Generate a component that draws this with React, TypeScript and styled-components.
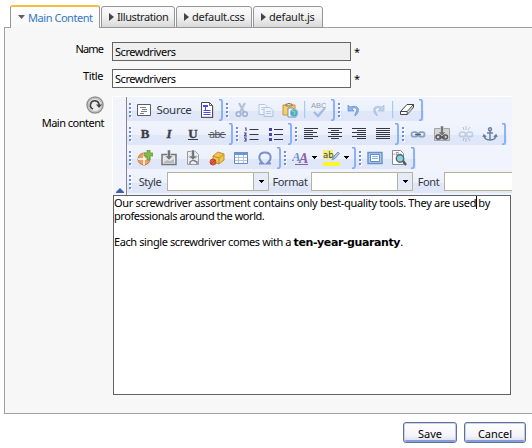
import React from 'react';
import styled, { createGlobalStyle, css } from 'styled-components';

const Global = createGlobalStyle`
  * { box-sizing: border-box; }
  body { margin: 0; background: #fff; overflow: hidden; }
  #root { width: 532px; height: 448px; overflow: hidden; }
`;

const Page = styled.div`
  width: 532px;
  height: 448px;
  padding: 5px 0 0 4px;
  background: #fff;
  color: #000;
  font: 11px/13px 'Noto Sans', 'Open Sans', sans-serif;
`;
const Tabs = styled.div`
  display: flex;
  align-items: flex-end;
  gap: 1px;
  height: 23px;
  padding-left: 6px;
`;
const Tab = styled.div<{ $w: number; $active?: boolean }>`
  display: flex;
  align-items: center;
  gap: 3px;
  width: ${p => p.$w}px;
  height: 22px;
  padding: 0 0 1px 7px;
  border: 1px solid #969696;
  border-radius: 3px 3px 0 0;
  background: linear-gradient(#fbfbfb 0%, #f1f1f1 50%, #d9d9d9 100%);
  color: #222;
  position: relative;
  svg { flex: none; }
  ${p => p.$active && css`
    height: 23px;
    padding-left: 7px;
    border-top: 2px solid #f4bf41;
    border-bottom: 0;
    background: linear-gradient(#fff, #f7f7f7);
    color: #3478bd;
    z-index: 1;
  `}
`;
const T = styled.span<{ $ls?: number; $size?: number }>`
  white-space: pre;
  letter-spacing: ${p => p.$ls ?? -0.4}px;
  font-size: ${p => p.$size ?? 11}px;
`;
const Panel = styled.main`
  height: 387px;
  margin-top: -1px;
  padding: 14px 0 0 0;
  border: solid #a0a0a0;
  border-width: 1px 0 1px 1px;
  background: #f7f7f7;
`;
const Field = styled.div`
  display: flex;
  height: 27px;
`;
const Label = styled.label`
  width: 107px;
  padding-right: 9px;
  text-align: right;
`;
const Input = styled.div<{ $readonly?: boolean }>`
  width: 239px;
  height: 19px;
  padding: 2px 2px;
  border: 1px solid #646466;
  background: ${p => (p.$readonly ? '#efefef' : '#fff')};
`;
const Star = styled.span`
  padding: 3px 0 0 3px;
`;
const EditorRow = styled.div`
  display: flex;
`;
const EditorLabel = styled.div`
  display: flex;
  flex-direction: column;
  align-items: flex-end;
  width: 107px;
  padding-right: 8px;
  gap: 2px;
`;
const Editor = styled.div`
  width: 400px;
`;
const Toolbar = styled.div`
  display: flex;
  height: 99px;
  border-top: 1px solid #fff;
  border-left: 1px solid #fff;
  background: #f1f4fd;
`;
const Collapse = styled.div`
  display: flex;
  align-items: flex-end;
  justify-content: center;
  width: 14px;
  padding-bottom: 2px;
  border-right: 1px solid #85858b;
`;
const Rows = styled.div`
  flex: 1;
  overflow: hidden;
`;
const Row = styled.div`
  display: flex;
  height: 24px;
  padding-top: 1px;
`;
const Group = styled.div<{ $grow?: boolean }>`
  display: flex;
  align-items: center;
  flex: ${p => (p.$grow ? '1' : 'none')};
  height: 23px;
  background: linear-gradient(#f1f4fd 0%, #eaf0fc 56%, #dfe7f9 57%, #dfe6f8 100%);
`;
const Slot = styled.div<{ $w?: number }>`
  display: flex;
  align-items: center;
  justify-content: center;
  flex: none;
  width: ${p => p.$w ?? 24}px;
  color: #363743;
  svg { display: block; flex: none; }
`;
const Combo = styled.div<{ $cut?: boolean }>`
  display: flex;
  flex: none;
  width: ${p => (p.$cut ? 68 : 102)}px;
  height: 19px;
  border: 1px solid #b4b49c;
  border-right-width: ${p => (p.$cut ? 0 : 1)}px;
  background: #fff;
`;
const ComboArrow = styled.div`
  display: flex;
  align-items: center;
  justify-content: center;
  width: 15px;
  margin-left: auto;
  border-left: 1px solid #b4b49c;
  background: #e5ebf8;
`;
const Document = styled.div`
  width: 398px;
  height: 200px;
  margin-left: 1px;
  padding: 0;
  border: 1px solid #626266;
  background: #fff;
`;
const Line = styled.div`
  display: flex;
  height: 13px;
`;
const Caret = styled.i`
  width: 1px;
  height: 13px;
  margin: 0 1px 0 0;
  background: #000;
`;
const Bold = styled.b<{ $ls: number }>`
  letter-spacing: ${p => p.$ls}px;
  font-family: 'DejaVu Sans', sans-serif;
`;
const Actions = styled.div`
  display: flex;
  justify-content: flex-end;
  gap: 7px;
  padding: 8px 6px 0 0;
`;
const Button = styled.button<{ $w: number }>`
  width: ${p => p.$w}px;
  height: 21px;
  padding: 1px 0 0;
  border: 1px solid #686f88;
  border-radius: 3px;
  background: linear-gradient(#fff, #f5f5fa 65%, #dcdce9);
  box-shadow: inset 0 1px #c5d5fa, inset 1px 0 #c5d5fa, inset -1px 0 #b6caf6, inset 0 -2px #819ddd;
  font: 11px/13px 'Noto Sans', sans-serif;
  color: #000;
`;

const Tri = ({ down, c = '#444' }: { down?: boolean; c?: string }) => (
  <svg width={down ? 7 : 5} height={down ? 4 : 8}><path fill={c} d={down ? 'M0 0h7L3.5 4z' : 'M0 0v8L5 4z'} /></svg>
);
const SmallDown = () => <svg width="5" height="3" shapeRendering="crispEdges"><path d="M0 0h5v1H4v1H3v1H2V2H1V1H0z" /></svg>;
const Handle = () => (
  <Slot $w={6}><svg width="6" height="18" shapeRendering="crispEdges">
    {[2, 6, 10, 14].map(y => <g key={y}><path fill="#fff" d={`M3 ${y + 1}h2v2h-2z`} /><path fill="#6b8ddb" d={`M2 ${y}h2v2h-2z`} /></g>)}
  </svg></Slot>
);
const End = () => (
  <Slot $w={5}><svg width="5" height="22"><path d="M0 .5h1.5Q3 .5 3 3v16Q3 21.5 0 21.5" fill="none" stroke="#86aaf5" strokeWidth="1.8" /></svg></Slot>
);
const Sep = () => <Slot $w={5}><svg width="2" height="17"><path fill="#a6c9f5" d="M0 0h1.2v17H0z" /></svg></Slot>;
const Ic = ({ children, o = 1, w = 16 }: { children: React.ReactNode; o?: number; w?: number }) => (
  <svg width={w} height="16" viewBox={`0 0 ${w} 16`} fill="none" stroke="currentColor" opacity={o}>{children}</svg>
);
const Serif = ({ ch, children, it }: { ch: string; children?: React.ReactNode; it?: boolean }) => (
  <Slot><Ic><text x="8" y="12" textAnchor="middle" fontFamily="Liberation Serif, serif" fontWeight="bold" fontStyle={it ? 'italic' : 'normal'} fontSize="13" fill="#3b3d49" stroke="#3b3d49" strokeWidth=".35">{ch}</text>{children}</Ic></Slot>
);
const Align = ({ rows }: { rows: [number, number][] }) => (
  <Slot><svg width="14" height="12" shapeRendering="crispEdges" fill="#343641">{rows.map(([x, w], i) => <rect key={i} x={x} y={i * 2} width={w} height="1" />)}</svg></Slot>
);
const Chain = ({ broken }: { broken?: boolean }) => (
  <Ic o={broken ? .4 : 1}>
    <g stroke="#8ba2bd" strokeWidth="1.8"><rect x="1.5" y="6.2" width="6" height="4.5" rx="2" /><rect x="8.5" y="6.2" width="6" height="4.5" rx="2" /></g>
    {broken ? <path stroke="#687687" d="M5 1l1 3M8 0v4M12 1l-2 3M5 15l1-3M8 16v-4M12 15l-2-3" /> : <path stroke="#50677f" strokeWidth="1.5" d="M5 8.5h6" />}
  </Ic>
);
const Download = () => <path d="M6.5 0h3v6H12l-4 4-4-4h2.5z" fill="#73777d" stroke="#eee" strokeWidth=".5" />;

function RowOne() {
  return <Row>
    <Group><Handle />
      <Slot $w={62}><Ic><path d="M1.5 2.5h13v11h-13z" fill="#fff" stroke="#555d69" /><path stroke="#777f89" d="M4 5.5h6M6 7.5h5M5 9.5h6M4 11.5h4" /></Ic><Slot $w={4} /><T $size={11.5} $ls={-0.3}>Source</T></Slot>
      <Slot><Ic><path d="M2.5.5h8l3 3v12h-11z" fill="#fff" stroke="#4b4b4d" /><path d="M13.7 4v11.7M2 15.3h12" stroke="#555" /><path d="M10.5.5v3h3" stroke="#666" /><path d="M4 3.5h5M4 4.5h5M6.5 4v4M4.5 8.5h7M4.5 10.5h7M4.5 12.5h7" stroke="#4b48ef" /></Ic></Slot><End />
    </Group>
    <Group><Handle />
      <Slot><Ic o={.5}><path d="M5 1l5 9M11 1L6 10" stroke="#7b8da9" strokeWidth="2" /><circle cx="4.5" cy="12" r="2.3" stroke="#657fae" strokeWidth="1.6" /><circle cx="11" cy="12" r="2.3" stroke="#657fae" strokeWidth="1.6" /></Ic></Slot>
      <Slot><Ic o={.5}><path d="M1 2.5h6l3 3v7H1z" fill="#fff" stroke="#809cc5" /><path d="M6 5.5h6l3 3v6H6z" fill="#edf5ff" stroke="#809cc5" /><path d="M3 5.5h3M3 7.5h3M8 9.5h5M8 11.5h5" stroke="#8aacd5" /></Ic></Slot>
      <Slot><Ic><path d="M1 3h12v10H1z" fill="#f5d06d" stroke="#c89138" /><path d="M4 4V2h2l1-1 1 1h2v2z" fill="#ddd" stroke="#99733c" /><path d="M6 6h5l3 3v6H6z" fill="#fff" stroke="#7c8ba5" /><circle cx="12" cy="11" r="3.8" fill="#4ba3d2" stroke="#80c3dc" /><path d="M10 9l3 1-1 3" stroke="#8cce9c" strokeWidth="1.5" /></Ic></Slot>
      <Sep />
      <Slot><Ic o={.6}><text x="0" y="6" fontSize="7.5" fontFamily="Liberation Sans" stroke="none" fill="#526177">ABC</text><path d="M3 10l4 4 7-8" stroke="#7d9bd0" strokeWidth="2.3" /></Ic></Slot><End />
    </Group>
    <Group><Handle />
      <Slot><Ic><path d="M2 3v6h6L5.8 6.8C9 4 13 7 9 12v2c6-5 4-12-5-9z" fill="#8fb7ef" stroke="#5a8acf" strokeWidth=".7" /></Ic></Slot>
      <Slot><Ic o={.5}><path transform="translate(16 0) scale(-1 1)" d="M2 3v6h6L5.8 6.8C9 4 13 7 9 12v2c6-5 4-12-5-9z" fill="#8fb7d9" stroke="#6b90bd" strokeWidth=".7" /></Ic></Slot><Sep />
      <Slot><Ic><path d="M1.5 9.5L8 2.5h6.5v3l-6.3 7H1.5z" fill="#fff" stroke="#444" /><path d="M1.5 9.5h6.7l6.3-7M8.2 9.5v3" stroke="#444" /><path d="M9 11l5-6" stroke="#aaa" /></Ic></Slot><End />
    </Group>
  </Row>;
}
function RowTwo() {
  return <Row>
    <Group><Handle /><Serif ch="B" /><Serif ch="I" it /><Serif ch="U"><path d="M3 13.5h10" stroke="#3b3d49" /></Serif>
      <Slot><Ic w={18}><text x="9" y="12" textAnchor="middle" textLength="16" fontFamily="DejaVu Sans" fontSize="10" fill="#565860" stroke="none">abc</text><path d="M0 8.5h18" stroke="#555861" /></Ic></Slot><End /></Group>
    <Group><Handle />
      <Slot><Ic><path d="M5.5 3.5h9M5.5 8.5h9M5.5 13.5h9" /><path d="M1 2h1v3M0 7h2v1L0 10h3M0 12h2v3H0M1 13.5h1" stroke="#454198" strokeWidth="1.1" /></Ic></Slot>
      <Slot><Ic><path d="M6 3.5h9M6 8.5h9M6 13.5h9" /><path d="M1 2h3v3H1zM1 7h3v3H1zM1 12h3v3H1z" fill="#4645a9" stroke="none" /></Ic></Slot><End /></Group>
    <Group><Handle />
      <Align rows={[[0, 14], [0, 9], [0, 13], [0, 9], [0, 14], [0, 9]]} />
      <Align rows={[[0, 14], [3, 8], [0, 14], [3, 8], [0, 14], [3, 8]]} />
      <Align rows={[[0, 14], [5, 9], [0, 14], [5, 9], [0, 14], [5, 9]]} />
      <Align rows={[[0, 14], [0, 14], [0, 14], [0, 14], [0, 14], [0, 14]]} /><End /></Group>
    <Group><Handle /><Slot><Chain /></Slot>
      <Slot><Ic><path d="M.5 2.5h15v12H.5z" fill="#d4d4d2" stroke="#a2a4a4" /><g stroke="#54585c" strokeWidth="1.5"><rect x="2" y="9" width="5" height="4" rx="2" /><rect x="8.5" y="9" width="5" height="4" rx="2" /><path d="M5 11h6" /></g><Download /></Ic></Slot>
      <Slot><Chain broken /></Slot>
      <Slot><Ic><g stroke="#667e9b" strokeWidth="1.4"><circle cx="8" cy="3.3" r="1.5" /><path d="M8 5v9M5 7h6M2 9c0 3 2 5 6 5s6-2 6-5M1 11l1-2 2 2M12 11l2-2 1 2" /></g></Ic></Slot><End /></Group>
  </Row>;
}
function RowThree() {
  return <Row>
    <Group><Handle />
      <Slot><Ic><circle cx="7" cy="9" r="6" fill="#ef9f58" stroke="#bd764b" /><path d="M7 3v12M1 9h12" stroke="#fff" strokeWidth="1.5" /><path d="M10 0h3v3h3v3h-3v4h-3V6H7V3h3z" fill="#84bd48" stroke="#5d9139" strokeWidth=".7" /></Ic></Slot>
      <Slot><Ic><path d="M1 4.5h14v10H1z" fill="#e6e6e4" stroke="#74777a" strokeWidth="1.5" /><path d="M3 12l3-2 3 1 4-2v4H3z" fill="#b7baba" stroke="none" /><Download /></Ic></Slot>
      <Slot><Ic><path d="M2.5 1.5h8l3 3v10h-11z" fill="#eee" stroke="#999ca0" /><path d="M5 14v-2l3-2 4 2v2M4 6l2 2M12 6l-2 2" stroke="#777c83" strokeWidth="1.4" /><Download /></Ic></Slot>
      <Slot><Ic><path d="M4 6l5-4 6 2v6l-5 4-6-2z" fill="#efc54b" stroke="#c6912b" /><path d="M4 6l6 2 5-4M10 8v6" stroke="#ba8f35" /><circle cx="4" cy="12" r="3" fill="#e9593e" stroke="#c04532" /><path d="M2 14l4-4" stroke="#9b4939" /></Ic></Slot>
      <Slot><Ic><path d="M1.5 2.5h13v11h-13z" fill="#fff" stroke="#6389c2" /><path d="M1 2h14v3H1z" fill="#6d96ce" stroke="none" /><path d="M2 7.5h12M2 10.5h12M5.5 5v8M10.5 5v8" stroke="#afc4df" /></Ic></Slot>
      <Slot><Ic><path d="M2 13.5h4c-6-5-4-11 2-11s8 6 2 11h4" stroke="#7890cb" strokeWidth="2" /></Ic></Slot><End />
    </Group>
    <Group><Handle />
      <Slot $w={32}><Ic w={17}><text x="0" y="11" fontFamily="Liberation Serif" fontStyle="italic" fontWeight="bold" fontSize="13" fill="#6c91d3" stroke="none">A</text><text x="7" y="13" fontFamily="Liberation Serif" fontStyle="italic" fontWeight="bold" fontSize="14" fill="#8b60aa" stroke="none">A</text><path d="M3 14.5h13" stroke="#8b60aa" /></Ic><Slot $w={3} /><SmallDown /></Slot>
      <Slot $w={32}><Ic w={17}><path d="M0 0h10v9H0z" fill="#f4ef74" stroke="none" /><text x="0" y="8" fontFamily="DejaVu Sans" fontSize="8.5" fill="#444" stroke="none">ab</text><path d="M9 10l2-4 4-4 1.5 1.5-4 4.5z" fill="#afc6e7" stroke="#7393be" /><path d="M0 12h17v4H0z" fill="#fdf52b" stroke="none" /></Ic><Slot $w={4} /><SmallDown /></Slot><End />
    </Group>
    <Group><Handle />
      <Slot><Ic><path d="M1 2.5h14v11H1z" fill="#a8ccf4" stroke="#6d91c2" strokeWidth="1.4" /><path d="M3.5 4.5h9v7h-9z" fill="#fff" stroke="#5e8fca" /><path d="M5 6.5h6M5 8.5h6" stroke="#8eb4df" /></Ic></Slot>
      <Slot><Ic><path d="M1.5.5h8l3 3v11h-11z" fill="#fff" stroke="#888c92" /><text x="2" y="6" fontSize="5" stroke="none" fill="#555">&lt;P&gt;</text><circle cx="9" cy="8.5" r="3.7" fill="#83d7df" stroke="#5b6369" strokeWidth="1.4" /><path d="M12 11l3 4" stroke="#555" strokeWidth="2.3" /></Ic></Slot><End />
    </Group>
  </Row>;
}

export default function App() {
  return <><Global /><Page>
    <Tabs>
      <Tab $w={90} $active><Tri down c="#5e5e5e" /><T $ls={-0.45}>Main Content</T></Tab>
      <Tab $w={74}><Tri /><T>Illustration</T></Tab>
      <Tab $w={76}><Tri /><T $ls={-0.25}>default.css</T></Tab>
      <Tab $w={70}><Tri /><T $ls={-0.2}>default.js</T></Tab>
    </Tabs>
    <Panel>
      <Field><Label><T $ls={-0.9}>Name</T></Label><Input $readonly><T $ls={-0.45}>Screwdrivers</T></Input><Star>*</Star></Field>
      <Field><Label><T>Title</T></Label><Input><T $ls={-0.45}>Screwdrivers</T></Input><Star>*</Star></Field>
      <EditorRow>
        <EditorLabel>
          <svg width="18" height="18"><circle cx="9" cy="9" r="8" fill="#dedede" stroke="#929292" strokeWidth="1.5" /><circle cx="9" cy="9" r="6.5" fill="#ececec" stroke="#bcbcbc" /><path d="M7 13a4.3 4.3 0 1 1 6-4" fill="none" stroke="#444" strokeWidth="1.7" /><path d="M10 8.5h6L13 12z" fill="#444" /></svg>
          <T $ls={-0.5}>Main content</T>
        </EditorLabel>
        <Editor>
          <Toolbar>
            <Collapse><svg width="8" height="5"><path fill="#3e5eae" d="M4 0l4 4v1H0V4z" /></svg></Collapse>
            <Rows>
              <RowOne /><RowTwo /><RowThree />
              <Row><Group $grow><Handle />
                <Slot $w={34}><T>Style</T></Slot><Combo><ComboArrow><SmallDown /></ComboArrow></Combo>
                <Slot $w={42}><T>Format</T></Slot><Combo><ComboArrow><SmallDown /></ComboArrow></Combo>
                <Slot $w={31}><T>Font</T></Slot><Combo $cut />
              </Group></Row>
            </Rows>
          </Toolbar>
          <Document>
            <Line><T $ls={-0.32}>Our screwdriver assortment contains only best-quality tools. They are used</T><Caret /><T $ls={0}>by</T></Line>
            <Line><T $ls={-0.45}>professionals around the world.</T></Line>
            <Line />
            <Line><T $ls={-0.4}>Each single screwdriver comes with a <Bold $ls={-0.4}>ten-year-guaranty</Bold>.</T></Line>
          </Document>
        </Editor>
      </EditorRow>
    </Panel>
    <Actions><Button $w={54}>Save</Button><Button $w={62}>Cancel</Button></Actions>
  </Page></>;
}
